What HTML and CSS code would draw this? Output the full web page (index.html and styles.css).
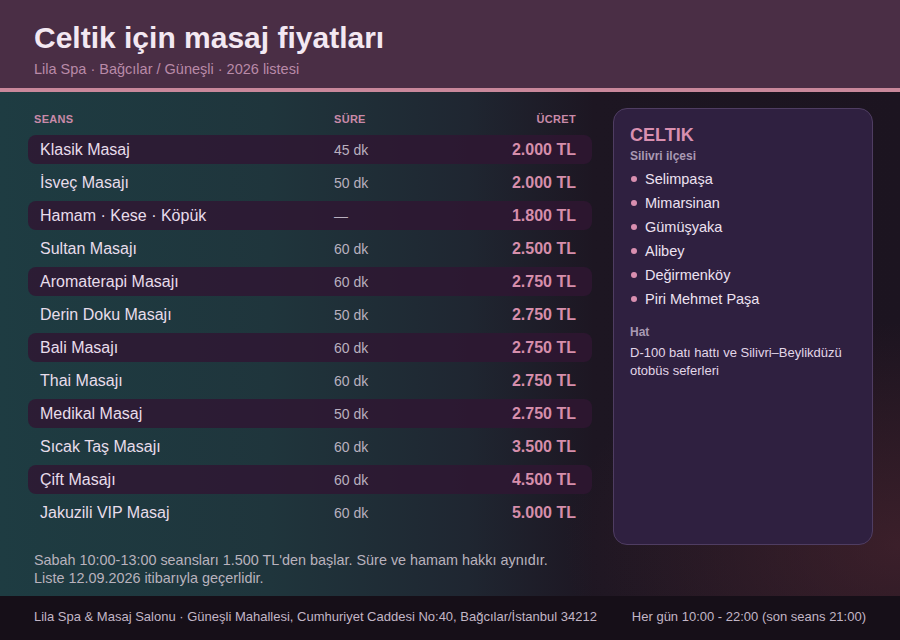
FILE: index.html
```html
<!DOCTYPE html>
<html lang="tr">
<head>
<meta charset="utf-8">
<title>Celtik için masaj fiyatları</title>
<link rel="stylesheet" href="styles.css">
</head>
<body>
<div class="page">
  <header class="top">
    <h1 class="title">Celtik için masaj fiyatları</h1>
    <p class="subtitle">Lila Spa · Bağcılar / Güneşli · 2026 listesi</p>
  </header>
  <main class="main">
    <div class="grid">
      <section class="table">
        <div class="thead">
          <span>Seans</span><span>Süre</span><span class="r">Ücret</span>
        </div>
        <div class="row alt"><span class="name">Klasik Masaj</span><span class="dur">45 dk</span><span class="price">2.000 TL</span></div>
        <div class="row"><span class="name">İsveç Masajı</span><span class="dur">50 dk</span><span class="price">2.000 TL</span></div>
        <div class="row alt"><span class="name">Hamam · Kese · Köpük</span><span class="dur">—</span><span class="price">1.800 TL</span></div>
        <div class="row"><span class="name">Sultan Masajı</span><span class="dur">60 dk</span><span class="price">2.500 TL</span></div>
        <div class="row alt"><span class="name">Aromaterapi Masajı</span><span class="dur">60 dk</span><span class="price">2.750 TL</span></div>
        <div class="row"><span class="name">Derin Doku Masajı</span><span class="dur">50 dk</span><span class="price">2.750 TL</span></div>
        <div class="row alt"><span class="name">Bali Masajı</span><span class="dur">60 dk</span><span class="price">2.750 TL</span></div>
        <div class="row"><span class="name">Thai Masajı</span><span class="dur">60 dk</span><span class="price">2.750 TL</span></div>
        <div class="row alt"><span class="name">Medikal Masaj</span><span class="dur">50 dk</span><span class="price">2.750 TL</span></div>
        <div class="row"><span class="name">Sıcak Taş Masajı</span><span class="dur">60 dk</span><span class="price">3.500 TL</span></div>
        <div class="row alt"><span class="name">Çift Masajı</span><span class="dur">60 dk</span><span class="price">4.500 TL</span></div>
        <div class="row"><span class="name">Jakuzili VIP Masaj</span><span class="dur">60 dk</span><span class="price">5.000 TL</span></div>
      </section>
      <aside class="card">
        <h2 class="card-title">CELTIK</h2>
        <div class="card-label">Silivri ilçesi</div>
        <ul class="places">
          <li>Selimpaşa</li>
          <li>Mimarsinan</li>
          <li>Gümüşyaka</li>
          <li>Alibey</li>
          <li>Değirmenköy</li>
          <li>Piri Mehmet Paşa</li>
        </ul>
        <div class="card-label hat">Hat</div>
        <p class="card-text">D-100 batı hattı ve Silivri–Beylikdüzü otobüs seferleri</p>
      </aside>
    </div>
    <p class="note">Sabah 10:00-13:00 seansları 1.500 TL'den başlar. Süre ve hamam hakkı aynıdır.<br>Liste 12.09.2026 itibarıyla geçerlidir.</p>
  </main>
  <footer class="foot">
    <span>Lila Spa &amp; Masaj Salonu · Güneşli Mahallesi, Cumhuriyet Caddesi No:40, Bağcılar/İstanbul 34212</span>
    <span>Her gün 10:00 - 22:00 (son seans 21:00)</span>
  </footer>
</div>
</body>
</html>
```

FILE: styles.css
```css
* { box-sizing: border-box; }
html, body { margin: 0; padding: 0; }
body {
  width: 900px;
  height: 640px;
  overflow: hidden;
  font-family: "Liberation Sans", Arial, sans-serif;
  background: #1c1420;
}
.page {
  width: 900px;
  height: 640px;
  display: flex;
  flex-direction: column;
}
.top {
  background: #4a2e45;
  border-bottom: 4px solid #c9889b;
  padding: 20px 34px 10px;
  height: 92px;
}
.title {
  margin: 0;
  font-size: 30px;
  line-height: 36px;
  font-weight: 700;
  color: #f3e8f2;
}
.subtitle {
  margin: 4px 0 0;
  font-size: 14.5px;
  line-height: 18px;
  color: #b98aa8;
}
.main {
  flex: 1;
  padding: 16px 27px 0 28px;
  background:
    radial-gradient(ellipse 480px 320px at 100% 90%, rgba(90, 42, 52, 0.5), rgba(90, 42, 52, 0) 70%),
    linear-gradient(90deg, #1e3c42 0%, #1f353c 30%, #1f2631 52%, #1d1622 66%, #1c1420 100%);
}
.grid {
  display: grid;
  grid-template-columns: 564px 260px;
  column-gap: 21px;
  align-items: stretch;
}
.table {
  padding-bottom: 14px;
}
.thead, .row {
  display: grid;
  align-items: center;
}
.thead {
  grid-template-columns: 300px 1fr 120px;
  height: 27px;
  padding: 0 16px 6px 6px;
  font-size: 11px;
  font-weight: 700;
  text-transform: uppercase;
  letter-spacing: 0.3px;
  color: #c98aa9;
}
.r { text-align: right; }
.row {
  grid-template-columns: 294px 1fr 120px;
  height: 29px;
  margin-bottom: 4px;
  padding: 0 16px 0 12px;
  border-radius: 8px;
}
.row.alt { background: rgba(48, 22, 50, 0.82); }
.name {
  font-size: 16px;
  color: #e8ddeb;
}
.dur {
  font-size: 14px;
  color: #b9b0bf;
}
.price {
  text-align: right;
  font-size: 16px;
  font-weight: 700;
  color: #d68eab;
}
.card {
  background: #2f2040;
  border: 1px solid #4f3d62;
  border-radius: 14px;
  padding: 15px 17px 15px 16px;
}
.card-title {
  margin: 0;
  font-size: 18px;
  line-height: 22px;
  font-weight: 700;
  color: #d98fb0;
}
.card-label {
  margin-top: 2px;
  font-size: 12px;
  line-height: 16px;
  font-weight: 700;
  color: #a999b3;
}
.places {
  list-style: none;
  margin: 3px 0 0;
  padding: 0;
}
.places li {
  display: flex;
  align-items: center;
  height: 24px;
  font-size: 14.5px;
  color: #ede2f1;
}
.places li::before {
  content: "";
  width: 6px;
  height: 6px;
  border-radius: 50%;
  background: #d98fb0;
  margin: 0 8px 0 1px;
}
.card-label.hat { margin-top: 13px; }
.card-text {
  margin: 4px 0 0;
  font-size: 13px;
  line-height: 18px;
  color: #e2d6e8;
}
.note {
  margin: 6px 0 0 6px;
  font-size: 14.4px;
  line-height: 18px;
  color: #b9b2bd;
}
.foot {
  height: 44px;
  flex: none;
  background: #160f18;
  display: flex;
  justify-content: space-between;
  align-items: center;
  padding: 0 34px 4px;
  font-size: 13px;
  color: #c2b6c6;
}
```
